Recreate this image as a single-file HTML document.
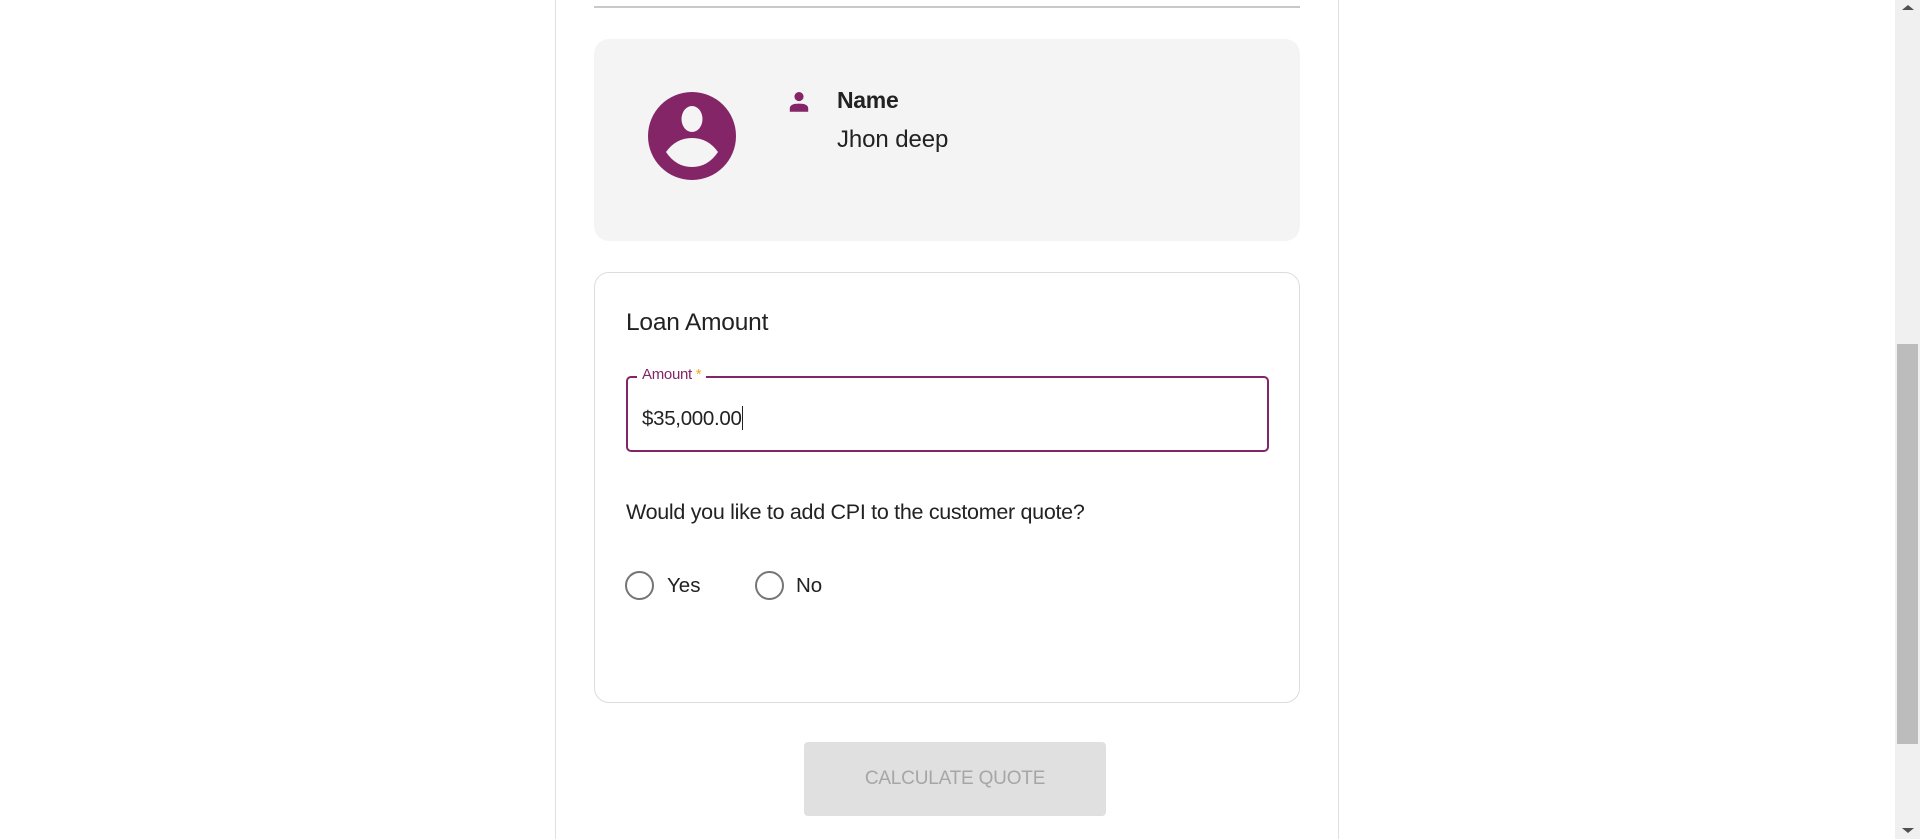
<!DOCTYPE html>
<html><head><meta charset="utf-8"><style>
html,body{margin:0;padding:0;width:1920px;height:839px;overflow:hidden;background:#fff;font-family:"Liberation Sans",Arial,sans-serif;color:#222;}
.abs{position:absolute}
</style></head><body>
<div class="abs" style="left:555px;top:0;width:1px;height:839px;background:#e0e0e0"></div>
<div class="abs" style="left:1338px;top:0;width:1px;height:839px;background:#e0e0e0"></div>
<div class="abs" style="left:594px;top:6px;width:706px;height:2px;background:#c8c8c8"></div>

<div class="abs" style="left:594px;top:39px;width:706px;height:202px;background:#f4f4f4;border-radius:15px"></div>
<svg class="abs" style="left:648px;top:92px" width="88" height="88" viewBox="0 0 88 88">
<circle cx="44" cy="44" r="44" fill="#832567"/>
<ellipse cx="44" cy="27" rx="10.5" ry="13" fill="#f4f4f4"/>
<path d="M18 60 Q28 46 44 46 Q60 46 70 60 Q60 75 44 75 Q28 75 18 60Z" fill="#f4f4f4"/>
</svg>
<svg class="abs" style="left:786px;top:89px" width="26" height="26" viewBox="0 0 24 24">
<circle cx="12" cy="7" r="4.2" fill="#832567"/>
<path d="M3.5 21 V18 Q3.5 13.5 12 13.5 Q20.5 13.5 20.5 18 V21Z" fill="#832567"/>
</svg>
<div class="abs" style="left:837px;top:87px;font-size:23px;font-weight:bold;letter-spacing:-0.3px">Name</div>
<div class="abs" style="left:837px;top:126px;font-size:24px;letter-spacing:-0.1px">Jhon deep</div>

<div class="abs" style="left:594px;top:272px;width:704px;height:429px;border:1px solid #dcdcdc;border-radius:15px"></div>
<div class="abs" style="left:626px;top:309px;font-size:24.5px;letter-spacing:-0.2px">Loan Amount</div>
<div class="abs" style="left:626px;top:376px;width:639px;height:72px;border:2px solid #832567;border-radius:5px"></div>
<div class="abs" style="left:637px;top:366px;padding:0 5px;background:#fff;font-size:15px;color:#832567;letter-spacing:-0.3px">Amount <span style="color:#f5a623">*</span></div>
<div class="abs" style="left:642px;top:406px;font-size:20.5px;letter-spacing:-0.3px">$35,000.00<span style="display:inline-block;width:1.5px;height:24px;background:#222;vertical-align:-5px"></span></div>
<div class="abs" style="left:626px;top:500px;font-size:21.5px;letter-spacing:-0.3px">Would you like to add CPI to the customer quote?</div>
<div class="abs" style="left:625px;top:571px;width:25px;height:25px;border:2.5px solid #757575;border-radius:50%"></div>
<div class="abs" style="left:667px;top:574px;font-size:20.5px">Yes</div>
<div class="abs" style="left:755px;top:571px;width:25px;height:25px;border:2.5px solid #757575;border-radius:50%"></div>
<div class="abs" style="left:796px;top:574px;font-size:20.5px">No</div>

<div class="abs" style="left:804px;top:742px;width:302px;height:74px;background:#e0e0e0;border-radius:4px;color:#a6a6a6;font-size:19px;line-height:74px;text-align:center;letter-spacing:-0.2px">CALCULATE QUOTE</div>

<div class="abs" style="left:1895px;top:0;width:25px;height:839px;background:#f0f0f0"></div>
<div class="abs" style="left:1897px;top:344px;width:21px;height:400px;background:#bcbcbc"></div>
<div class="abs" style="left:1902px;top:5px;width:0;height:0;border-left:6px solid transparent;border-right:6px solid transparent;border-bottom:5px solid #505050"></div>
<div class="abs" style="left:1902px;top:828px;width:0;height:0;border-left:6px solid transparent;border-right:6px solid transparent;border-top:5px solid #505050"></div>
</body></html>
